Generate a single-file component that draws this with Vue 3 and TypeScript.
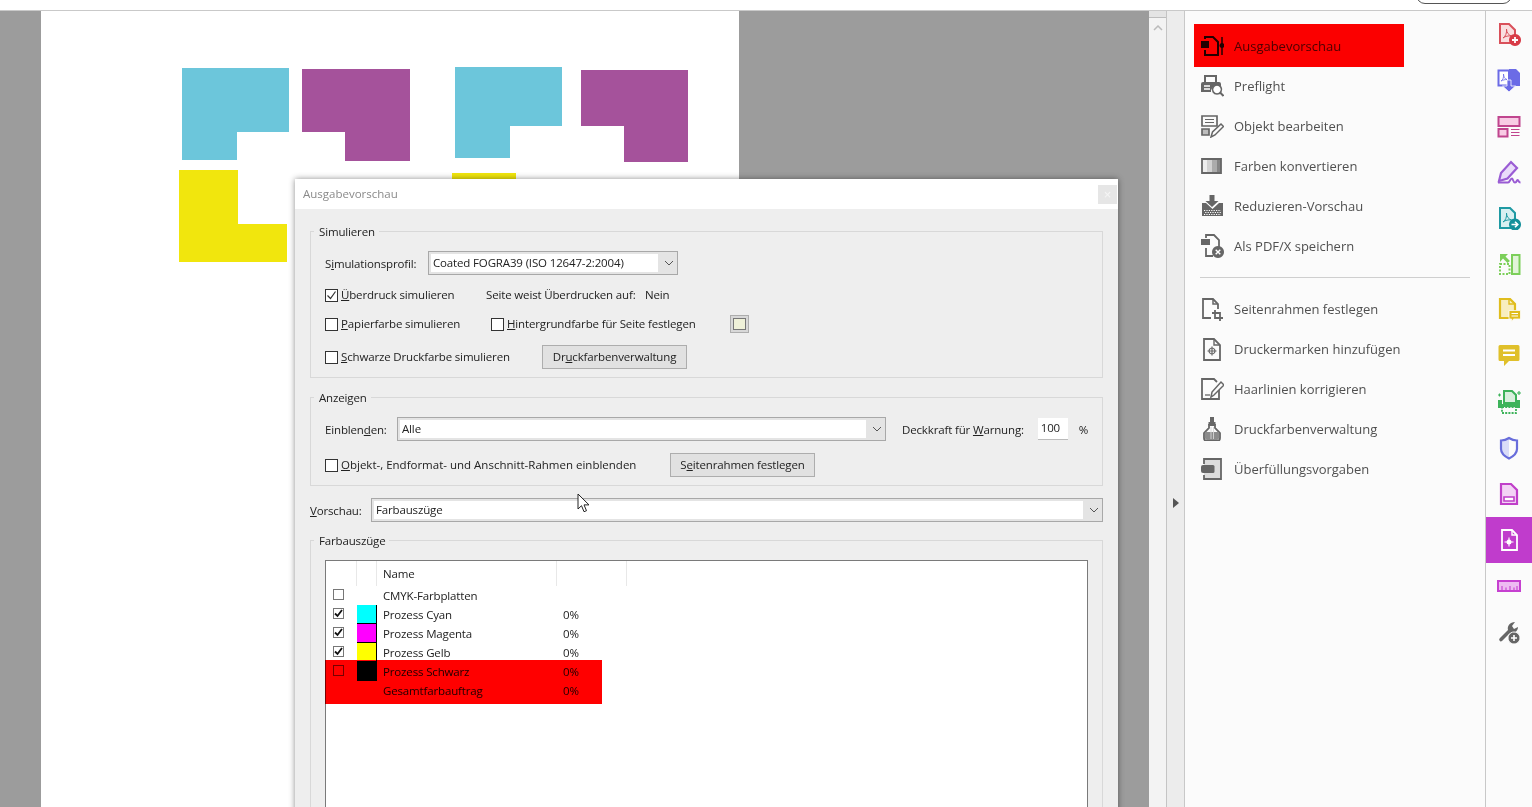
<script setup lang="ts">
type Shape = { d: string; f?: string; s?: string; w?: number; dash?: string };
type Icon = Shape[];

const gray = "#666666";

const panelTop: { label: string; icon: Icon }[] = [
  {
    label: "Ausgabevorschau",
    icon: [
      { d: "M5 5V3h8l5 5v13H5v-5", s: "#222", w: 2 },
      { d: "M1 7h8v7H1z", f: "#222" },
      { d: "M22 3v18", s: "#222", w: 1.5 },
      { d: "M22 9a2.5 2.5 0 1 0 .01 0z", f: "#222" },
    ],
  },
  {
    label: "Preflight",
    icon: [
      { d: "M5 8V2h11v6", s: gray, w: 2 },
      { d: "M1 10a2 2 0 0 1 2-2h16a2 2 0 0 1 2 2v3h-7a5 5 0 0 0-3 5H1z", f: gray },
      { d: "M4 12h6M4 15h6", s: "#fff", w: 1.3 },
      { d: "M17 11a4.5 4.5 0 1 0 .01 0z", s: gray, w: 1.6, f: "#fff" },
      { d: "M20 18.5l3.5 3.5", s: gray, w: 2 },
    ],
  },
  {
    label: "Objekt bearbeiten",
    icon: [
      { d: "M2 2h15v10H2z", s: gray, w: 1.7 },
      { d: "M5 5.5h9M5 8.5h9", s: gray, w: 1.2 },
      { d: "M2 15h7v6H2z", s: gray, w: 1.7, f: "#bdbdbd" },
      { d: "M11 23l1.5-5L21 10l2.5 2.5L15 21z", s: gray, w: 1.5 },
    ],
  },
  {
    label: "Farben konvertieren",
    icon: [
      { d: "M2 5h5v14H2z", f: "#ededed" },
      { d: "M7 5h5v14H7z", f: "#d2d2d2" },
      { d: "M12 5h5v14h-5z", f: "#ababab" },
      { d: "M17 5h4v14h-4z", f: "#858585" },
      { d: "M2 5h19v14H2z", s: gray, w: 1.8 },
    ],
  },
  {
    label: "Reduzieren-Vorschau",
    icon: [
      { d: "M9.5 1h5v6h4l-6.5 6-6.500-6h4z", f: gray },
      { d: "M6 9H2v13h21V9h-4l-6.500 6z", f: gray },
      { d: "M4 16.5h17M4 20.5h17", s: "#fff", w: 1.2, dash: "1.2 1.2" },
      { d: "M5.2 18.5h15.8", s: "#fff", w: 1.2, dash: "1.2 1.2" },
    ],
  },
  {
    label: "Als PDF/X speichern",
    icon: [
      { d: "M6 4V1h8l5 5v7", s: gray, w: 1.8 },
      { d: "M1 5h9v6H1z", f: gray },
      { d: "M6 14v8h7", s: gray, w: 1.8 },
      { d: "M18 12a6 6 0 1 0 .01 0z", f: gray },
      { d: "M15.7 15.7l4.6 4.6M20.3 15.7l-4.6 4.6", s: "#fff", w: 1.4 },
    ],
  },
];

const panelBottom: { label: string; icon: Icon }[] = [
  {
    label: "Seitenrahmen festlegen",
    icon: [
      { d: "M11 21H3V2h10l5 5v5", s: gray, w: 1.8 },
      { d: "M13 2v5h5", s: gray, w: 1.5 },
      { d: "M15 13v8h8M12 16h8v8", s: gray, w: 1.8 },
    ],
  },
  {
    label: "Druckermarken hinzufügen",
    icon: [
      { d: "M4 2h10l6 6v15H4z", s: gray, w: 1.8 },
      { d: "M14 2v6h6", s: gray, w: 1.4 },
      { d: "M12 11a3 3 0 1 0 .01 0zM12 9.5v9M7.5 14h9", s: gray, w: 1.2 },
    ],
  },
  {
    label: "Haarlinien korrigieren",
    icon: [
      { d: "M19 12v10H2V2h12l3 3", s: gray, w: 1.8 },
      { d: "M5 18h5", s: gray, w: 1.3 },
      { d: "M11 20l1-5L21 5l3 3-10 10z", s: gray, w: 1.5, f: "#fbfbfb" },
    ],
  },
  {
    label: "Druckfarbenverwaltung",
    icon: [
      { d: "M10 0h4v5h-4z", f: gray },
      { d: "M8.5 5h7v3h-7z", f: gray },
      { d: "M9 8h6v3l5 5v5a3 3 0 0 1-3 3H7a3 3 0 0 1-3-3v-5l5-5z", s: gray, w: 1.8 },
      { d: "M5 15h14v6a2 2 0 0 1-2 2H7a2 2 0 0 1-2-2z", f: "#8c8c8c" },
      { d: "M11 10v12M13.5 10v12", s: "#d8d8d8", w: 0.9 },
    ],
  },
  {
    label: "Überfüllungsvorgaben",
    icon: [
      { d: "M4 2h17v20H4z", f: "#dcdcdc" },
      { d: "M4 7V2h17v20H4v-4", s: gray, w: 1.8 },
      { d: "M3 8h10a1.5 1.5 0 0 1 1.5 1.5v5A1.5 1.5 0 0 1 13 16H3a2 2 0 0 1-2-2v-4a2 2 0 0 1 2-2z", f: gray },
    ],
  },
];

const pdfGlyph = "M6 16c2.5-1.5 4-5 3.5-9 0 3.5 2 6 5 7-3-.3-6 0-8.5 2z";

const rail: { icon: Icon; active?: boolean }[] = [
  {
    icon: [
      { d: "M3 2h9l6 6v13H3z", s: "#d9505a", w: 2, f: "#f9dfe0" },
      { d: pdfGlyph, s: "#d9505a", w: 1 },
      { d: "M18 12a6 6 0 1 0 .01 0z", f: "#d83b47" },
      { d: "M18 15v6M15 18h6", s: "#fff", w: 1.8 },
    ],
  },
  {
    icon: [
      { d: "M12 1h7l4 4v13H12z", f: "#6b6be6" },
      { d: "M1.5 2.5H12v15H1.5z", s: "#6b6be6", w: 2, f: "#fff" },
      { d: "M4 13c2-1 3-4 2.5-7 0 3 1.5 5 3.5 5.500-2 0-4 .5-6 1.500z", s: "#6b6be6", w: 0.8 },
      { d: "M10 12h4v6h4.500L12 24l-6.500-6H10z", f: "#6b6be6", s: "#fff", w: 0.8 },
    ],
  },
  {
    icon: [
      { d: "M1.5 3h21v9h-21z", s: "#c0458e", w: 2, f: "#f8cbe4" },
      { d: "M1.5 15h9v7.5h-9z", s: "#c0458e", w: 2, f: "#f8cbe4" },
      { d: "M14 15.5h8.5M14 18.5h8.5M14 21.5h8.5", s: "#c0458e", w: 1 },
    ],
  },
  {
    icon: [
      { d: "M2 21l2-8L14 2l6 6-9.5 10.5z", s: "#9a5cd4", w: 2.2, f: "#eadcfa" },
      { d: "M1 22.5h10c2 0 2-4 4-4 1 0 1 4 3 4s1.5-2.500 2.5-2.500 1 2.500 3 2.500", s: "#9a5cd4", w: 2 },
    ],
  },
  {
    icon: [
      { d: "M3 2h10l5 5v15H3z", s: "#1f9aa3", w: 2, f: "#d8f0f1" },
      { d: pdfGlyph, s: "#1f9aa3", w: 1 },
      { d: "M18 12.5a6 6 0 1 0 .01 0z", f: "#15909a" },
      { d: "M14.5 18.5h6M18 15.7l2.8 2.8-2.8 2.8", s: "#fff", w: 1.6 },
    ],
  },
  {
    icon: [
      { d: "M15 3h7.5v19H15z", s: "#7ccf5a", w: 2, f: "#e1f4d8" },
      { d: "M3 12h9.5v10H3z", s: "#7ccf5a", w: 2, dash: "2 1.5" },
      { d: "M3 2h8L8.5 4.500 13 9l-2.500 2L6 6.500 3 10z", f: "#7ccf5a" },
    ],
  },
  {
    icon: [
      { d: "M3 1h10l5 5v14H3z", s: "#e0bd1e", w: 2.2, f: "#f8eebf" },
      { d: "M12 1v5h6", s: "#e0bd1e", w: 1.4 },
      { d: "M12 12.5h11.5V21h-7l-2 3v-3H12z", f: "#e0bd1e", s: "#fbfbfb", w: 0.8 },
      { d: "M14.5 15.5H21M14.5 18H21", s: "#fff", w: 1.1 },
    ],
  },
  {
    icon: [
      { d: "M3 1h18a1.5 1.5 0 0 1 1.5 1.5v13A1.5 1.5 0 0 1 21 17H12l-5 5v-5H3a1.5 1.5 0 0 1-1.5-1.5v-13A1.5 1.5 0 0 1 3 1z", f: "#e0c02a" },
      { d: "M6 6.5h12M6 11h12", s: "#fff", w: 2 },
    ],
  },
  {
    icon: [
      { d: "M7 1h8l4 4v8H7z", s: "#3db35a", w: 2, f: "#d9f0de" },
      { d: "M1 10h4v4h14v-4h4v8H1z", f: "#3db35a" },
      { d: "M5 17h14v6H5z", s: "#3db35a", w: 1.8, f: "#fbfbfb", dash: "2 1.2" },
      { d: "M1 5h3M2.5 3.5v3M20 3h4M22 1v4", s: "#3db35a", w: 1.1 },
    ],
  },
  {
    icon: [
      { d: "M12 2c-3 2-5 2.5-8 2.5V13c0 4 4 7.5 8 9.5z", f: "#d9dcf8" },
      { d: "M12 2c3 2 5 2.5 8 2.5V13c0 4-4 7.5-8 9.5-4-2-8-5.500-8-9.500V4.500c3 0 5-.5 8-2.500z", s: "#686ddb", w: 2.2 },
    ],
  },
  {
    icon: [
      { d: "M4 2h10l6 6v14H4z", s: "#c03fc9", w: 2.2, f: "#f3d3f5" },
      { d: "M7 15h10v4H7z", s: "#c03fc9", w: 1.6, f: "#fff" },
    ],
  },
  {
    active: true,
    icon: [
      { d: "M5 2h10l5 5v15H5z", s: "#fff", w: 1.8 },
      { d: "M15 2v5h5", s: "#fff", w: 1.4 },
      { d: "M12 11.5a2.5 2.5 0 1 0 .01 0z", f: "#fff" },
      { d: "M12 9.5v9M7.5 14h9", s: "#fff", w: 1.1 },
    ],
  },
  {
    icon: [
      { d: "M1 7h22v10H1z", s: "#c640d0", w: 2, f: "#eebbf2" },
      { d: "M5 12v4M9 13.5V16M13 12v4M17 13.5V16M20 12v4", s: "#c640d0", w: 1.1 },
    ],
  },
  {
    icon: [
      { d: "M3 18l8-8c-1-4 2-8 7-8l-3 4 2 3 4-2c0 4-4 7-8 6l-8 8a1.5 1.5 0 0 1-2-3z", f: gray },
      { d: "M17 12a6 6 0 1 0 .01 0z", f: gray, s: "#fbfbfb", w: 1 },
      { d: "M17 15v6M14 18h6", s: "#fff", w: 1.6 },
    ],
  },
];

const inks: { name: string; value: string; checked: boolean; swatch?: string }[] = [
  { name: "CMYK-Farbplatten", value: "", checked: false },
  { name: "Prozess Cyan", value: "0%", checked: true, swatch: "#00ffff" },
  { name: "Prozess Magenta", value: "0%", checked: true, swatch: "#ff00ff" },
  { name: "Prozess Gelb", value: "0%", checked: true, swatch: "#ffff00" },
  { name: "Prozess Schwarz", value: "0%", checked: false, swatch: "#000000" },
];
</script>

<template>
  <div class="app">
    <header class="topbar"><div class="pill"></div></header>
    <div class="main">
      <section class="doc">
        <div class="page">
          <svg class="art" width="698" height="796" viewBox="41 11 698 796">
            <polygon points="182,68 289,68 289,132 237,132 237,160 182,160" fill="#6cc6db" />
            <polygon points="302,69 410,69 410,161 345,161 345,132 302,132" fill="#a5529b" />
            <polygon points="455,67 562,67 562,126 510,126 510,158 455,158" fill="#6cc6db" />
            <polygon points="581,70 688,70 688,162 624,162 624,126 581,126" fill="#a5529b" />
            <polygon points="179,170 238,170 238,224 287,224 287,262 179,262" fill="#f1e60d" />
            <polygon points="452,173 516,173 516,190 452,190" fill="#f1e60d" />
          </svg>
        </div>

        <div class="dialog">
          <div class="titlebar">
            <span>Ausgabevorschau</span>
            <button class="close">×</button>
          </div>
          <div class="dialog-body">
            <fieldset class="group">
              <legend>Simulieren</legend>
              <div class="row row-combo">
                <label class="field-label lbl-profile">S<u>i</u>mulationsprofil:</label>
                <div class="combo combo-profile">
                  <span class="combo-value">Coated FOGRA39 (ISO 12647-2:2004)</span>
                  <span class="combo-arrow"><svg width="10" height="6" viewBox="0 0 10 6"><path d="M1 1l4 4 4-4" fill="none" stroke="#555" /></svg></span>
                </div>
              </div>
              <div class="row row-a">
                <label class="check cell-161">
                  <span class="box"><svg width="13" height="13" viewBox="0 0 13 13"><path d="M2.5 6.5l3 3 5-7" fill="none" stroke="#333" stroke-width="1.2" /></svg></span>
                  <span class="txt"><u>Ü</u>berdruck simulieren</span>
                </label>
                <span class="txt cell-159">Seite weist Überdrucken auf:</span>
                <span class="txt">Nein</span>
              </div>
              <div class="row row-b">
                <label class="check cell-166">
                  <span class="box"></span>
                  <span class="txt"><u>P</u>apierfarbe simulieren</span>
                </label>
                <label class="check cell-239">
                  <span class="box"></span>
                  <span class="txt"><u>H</u>intergrundfarbe für Seite festlegen</span>
                </label>
                <span class="paper-swatch"><i></i></span>
              </div>
              <div class="row row-c">
                <label class="check cell-217">
                  <span class="box"></span>
                  <span class="txt"><u>S</u>chwarze Druckfarbe simulieren</span>
                </label>
                <button class="btn btn-ink">Dr<u>u</u>ckfarbenverwaltung</button>
              </div>
            </fieldset>

            <fieldset class="group group-show">
              <legend>Anzeigen</legend>
              <div class="row row-combo">
                <label class="field-label lbl-show">Einblen<u>d</u>en:</label>
                <div class="combo combo-show">
                  <span class="combo-value">Alle</span>
                  <span class="combo-arrow"><svg width="10" height="6" viewBox="0 0 10 6"><path d="M1 1l4 4 4-4" fill="none" stroke="#555" /></svg></span>
                </div>
                <span class="lbl-warn">Deckkraft für <u>W</u>arnung:</span>
                <span class="num">100</span>
                <span>%</span>
              </div>
              <div class="row row-d">
                <label class="check cell-345">
                  <span class="box"></span>
                  <span class="txt"><u>O</u>bjekt-, Endformat- und Anschnitt-Rahmen einblenden</span>
                </label>
                <button class="btn btn-frame">S<u>e</u>itenrahmen festlegen</button>
              </div>
            </fieldset>

            <div class="preview-row">
              <label class="lbl-preview"><u>V</u>orschau:</label>
              <div class="combo combo-preview">
                <span class="combo-value">Farbauszüge</span>
                <span class="combo-arrow"><svg width="10" height="6" viewBox="0 0 10 6"><path d="M1 1l4 4 4-4" fill="none" stroke="#555" /></svg></span>
              </div>
            </div>

            <fieldset class="group group-seps">
              <legend>Farbauszüge</legend>
              <div class="list">
                <div class="list-head">
                  <span></span><span></span><span class="name">Name</span><span></span>
                </div>
                <div v-for="ink in inks" :key="ink.name" class="list-row">
                  <span class="cell-check">
                    <span class="mini-box">
                      <svg v-if="ink.checked" width="11" height="11" viewBox="0 0 11 11"><path d="M2 5.5L4.5 8 9 2" fill="none" stroke="#111" stroke-width="1.8" /></svg>
                    </span>
                  </span>
                  <span class="cell-swatch" :class="{ filled: ink.swatch }" :style="{ background: ink.swatch ?? 'transparent' }"></span>
                  <span class="name">{{ ink.name }}</span>
                  <span class="value">{{ ink.value }}</span>
                </div>
                <div class="list-row">
                  <span></span><span></span>
                  <span class="name">Gesamtfarbauftrag</span>
                  <span class="value">0%</span>
                </div>
                <div class="redact redact-list"></div>
              </div>
            </fieldset>
          </div>
          <svg class="cursor" width="14" height="21" viewBox="0 0 14 21">
            <path d="M1 1v15l3.5-3.3 2.5 6 2.5-1-2.5-5.800h5z" fill="#fff" stroke="#222" stroke-width="1" />
          </svg>
        </div>
      </section>

      <div class="scrollbar">
        <div class="thumb"></div>
        <svg class="up" width="10" height="6" viewBox="0 0 10 6"><path d="M1 5l4-4 4 4" fill="none" stroke="#bbb" stroke-width="1.5" /></svg>
      </div>

      <div class="collapse"><span class="tri"></span></div>

      <aside class="panel">
        <div v-for="item in panelTop" :key="item.label" class="tool">
          <svg width="24" height="24" viewBox="0 0 24 24">
            <path v-for="(p, i) in item.icon" :key="i" :d="p.d" :fill="p.f ?? 'none'" :stroke="p.s ?? 'none'" :stroke-width="p.w ?? 1" :stroke-dasharray="p.dash" />
          </svg>
          <span>{{ item.label }}</span>
        </div>
        <div class="divider"></div>
        <div v-for="item in panelBottom" :key="item.label" class="tool">
          <svg width="24" height="24" viewBox="0 0 24 24">
            <path v-for="(p, i) in item.icon" :key="i" :d="p.d" :fill="p.f ?? 'none'" :stroke="p.s ?? 'none'" :stroke-width="p.w ?? 1" :stroke-dasharray="p.dash" />
          </svg>
          <span>{{ item.label }}</span>
        </div>
        <div class="redact redact-panel"></div>
      </aside>

      <nav class="rail">
        <div v-for="(item, n) in rail" :key="n" class="rail-item" :class="{ active: item.active }">
          <svg width="24" height="24" viewBox="0 0 24 24">
            <path v-for="(p, i) in item.icon" :key="i" :d="p.d" :fill="p.f ?? 'none'" :stroke="p.s ?? 'none'" :stroke-width="p.w ?? 1" :stroke-dasharray="p.dash" />
          </svg>
        </div>
      </nav>
    </div>
  </div>
</template>

<style>
html,
body {
  margin: 0;
  overflow: hidden;
}
</style>

<style scoped>
.app {
  width: 1532px;
  height: 807px;
  display: flex;
  flex-direction: column;
  overflow: hidden;
  font-family: "Open Sans", "Noto Sans", sans-serif;
  font-size: 11.5px;
  color: #222;
}

.topbar {
  height: 10px;
  flex-shrink: 0;
  background: #fff;
  border-bottom: 1px solid #c9c9c9;
  display: flex;
  justify-content: flex-end;
  overflow: hidden;
}

.pill {
  width: 94px;
  height: 20px;
  margin-top: -18px;
  margin-right: 20px;
  border: 1px solid #555;
  border-radius: 9px;
}

.main {
  flex: 1;
  display: flex;
  min-height: 0;
}

.doc {
  width: 1149px;
  flex-shrink: 0;
  background: #9c9c9c;
  position: relative;
  padding-left: 41px;
  box-sizing: border-box;
}

.page {
  width: 698px;
  height: 100%;
  background: #fff;
}

.art {
  display: block;
}

.dialog {
  position: absolute;
  left: 295px;
  top: 168px;
  width: 823px;
  height: 660px;
  background: #eeeeee;
  box-shadow: 0 0 6px rgba(0, 0, 0, 0.45);
}

.titlebar {
  height: 30px;
  box-sizing: border-box;
  padding: 0 1px 2px 8px;
  background: #fff;
  display: flex;
  align-items: center;
  justify-content: space-between;
  color: #8a8a8a;
}

.close {
  width: 19px;
  height: 19px;
  margin-top: 3px;
  border: 0;
  padding: 0;
  background: #e6e6e6;
  color: #f6f6f6;
  font-size: 13px;
  line-height: 19px;
}

.dialog-body {
  padding: 14px 15px 0;
  letter-spacing: -0.15px;
}

.group {
  margin: 0;
  padding: 12px 14px 8px;
  border: 1px solid #d8d8d8;
  min-width: 0;
}

.group legend {
  margin-left: -11px;
  padding: 0 4px 0 5px;
  line-height: 16px;
  transform: translateY(1px);
}

.group-show {
  margin-top: 11px;
}

.group-seps {
  margin-top: 10px;
  padding-bottom: 0;
}

.row {
  display: flex;
  align-items: center;
  height: 20px;
  white-space: nowrap;
}

.row-combo {
  height: 24px;
}

.row-a {
  margin-top: 10px;
}

.row-b {
  margin-top: 9px;
}

.row-c {
  margin-top: 11px;
  height: 24px;
}

.row-d {
  margin-top: 12px;
  height: 24px;
}

.check {
  display: flex;
  align-items: center;
  gap: 3px;
  flex-shrink: 0;
}

.txt {
  margin-top: -2px;
}

.box {
  width: 11px;
  height: 11px;
  border: 1px solid #333;
  background: #fff;
  display: block;
  position: relative;
  flex-shrink: 0;
}

.box svg {
  display: block;
  margin: -1px;
}

.cell-161 {
  width: 161px;
}

.cell-159 {
  width: 159px;
}

.cell-166 {
  width: 166px;
}

.cell-239 {
  width: 239px;
}

.cell-217 {
  width: 217px;
}

.cell-345 {
  width: 345px;
  letter-spacing: 0;
}

.paper-swatch {
  width: 17px;
  height: 16px;
  border: 1px solid #adadad;
  background: #d8d8d8;
  display: flex;
  align-items: center;
  justify-content: center;
}

.paper-swatch i {
  display: block;
  width: 11px;
  height: 10px;
  border: 1px solid #777;
  background: #eff1d8;
}

.field-label {
  flex-shrink: 0;
}

.lbl-profile {
  width: 103px;
}

.lbl-show {
  width: 72px;
}

.combo {
  display: flex;
  height: 24px;
  box-sizing: border-box;
  border: 1px solid #a8a8a8;
  padding: 2px;
  background: #e4e4e4;
  flex-shrink: 0;
}

.combo-value {
  flex: 1;
  background: #fff;
  padding-left: 2px;
  line-height: 18px;
}

.combo-arrow {
  width: 17px;
  box-sizing: border-box;
  padding-left: 4px;
  display: flex;
  align-items: center;
  justify-content: center;
}

.combo-profile {
  width: 250px;
}

.combo-show {
  width: 489px;
}

.combo-preview {
  flex: 1;
}

.lbl-warn {
  margin-left: 16px;
  width: 136px;
}

.num {
  width: 30px;
  height: 22px;
  box-sizing: border-box;
  background: #fff;
  border-bottom: 1px solid #bbb;
  padding-left: 3px;
  line-height: 20px;
  margin-right: 11px;
}

.btn {
  height: 24px;
  box-sizing: border-box;
  border: 1px solid #adadad;
  background: #e1e1e1;
  font: inherit;
  letter-spacing: inherit;
  color: inherit;
  padding: 0 0 2px;
}

.btn-ink {
  width: 145px;
}

.btn-frame {
  width: 145px;
  letter-spacing: -0.15px;
}

.preview-row {
  display: flex;
  align-items: center;
  height: 24px;
  margin-top: 12px;
}

.lbl-preview {
  width: 61px;
  flex-shrink: 0;
}

.list {
  position: relative;
  height: 300px;
  border: 1px solid #7a7a7a;
  background: #fff;
}

.list-head,
.list-row {
  display: grid;
  grid-template-columns: 31px 20px 180px 70px;
  align-items: center;
}

.list-head {
  height: 25px;
}

.list-head > span {
  height: 100%;
  box-sizing: border-box;
  border-right: 1px solid #e8e8e8;
  display: flex;
  align-items: center;
}

.list-row {
  height: 19px;
}

.name {
  padding-left: 6px;
}

.value {
  padding-left: 6px;
}

.cell-check {
  display: flex;
  padding-left: 7px;
  margin-top: -2px;
}

.mini-box {
  width: 9px;
  height: 9px;
  border: 1px solid #777;
  display: block;
}

.mini-box svg {
  display: block;
  margin: -1px;
}

.cell-swatch {
  height: 19px;
  box-sizing: border-box;
}

.cell-swatch.filled {
  border-right: 1px solid #000;
  border-bottom: 1px solid #000;
}

.redact {
  position: absolute;
  background: #ff0000;
  mix-blend-mode: multiply;
}

.redact-list {
  left: -1px;
  top: 99px;
  width: 277px;
  height: 44px;
}

.redact-panel {
  left: 9px;
  top: 13px;
  width: 210px;
  height: 43px;
}

.cursor {
  position: absolute;
  left: 282px;
  top: 314px;
}

.scrollbar {
  width: 17px;
  flex-shrink: 0;
  background: #f3f3f3;
  display: flex;
  flex-direction: column;
  align-items: center;
}

.thumb {
  width: 100%;
  height: 7px;
  box-sizing: border-box;
  background: #e4e4e4;
  border-bottom: 1px solid #bdbdbd;
}

.up {
  margin-top: 7px;
}

.collapse {
  width: 19px;
  flex-shrink: 0;
  box-sizing: border-box;
  background: #ececec;
  border-left: 1px solid #c4c4c4;
  border-right: 1px solid #c8c8c8;
  padding-top: 487px;
  display: flex;
  justify-content: center;
}

.tri {
  width: 0;
  height: 0;
  border-left: 6px solid #555;
  border-top: 5px solid transparent;
  border-bottom: 5px solid transparent;
}

.panel {
  width: 301px;
  flex-shrink: 0;
  box-sizing: border-box;
  background: #fbfbfb;
  border-right: 1px solid #c8c8c8;
  padding: 15px 15px 0 15px;
  position: relative;
}

.tool {
  height: 40px;
  display: flex;
  align-items: center;
  gap: 10px;
  font-size: 13px;
  color: #505050;
}

.tool svg {
  flex-shrink: 0;
}

.divider {
  height: 1px;
  background: #cfcfcf;
  margin: 11px 0;
}

.rail {
  flex: 1;
  background: #fbfbfb;
}

.rail-item {
  height: 46px;
  display: flex;
  align-items: center;
  justify-content: center;
}

.rail-item.active {
  background: #c03ccc;
}
</style>
